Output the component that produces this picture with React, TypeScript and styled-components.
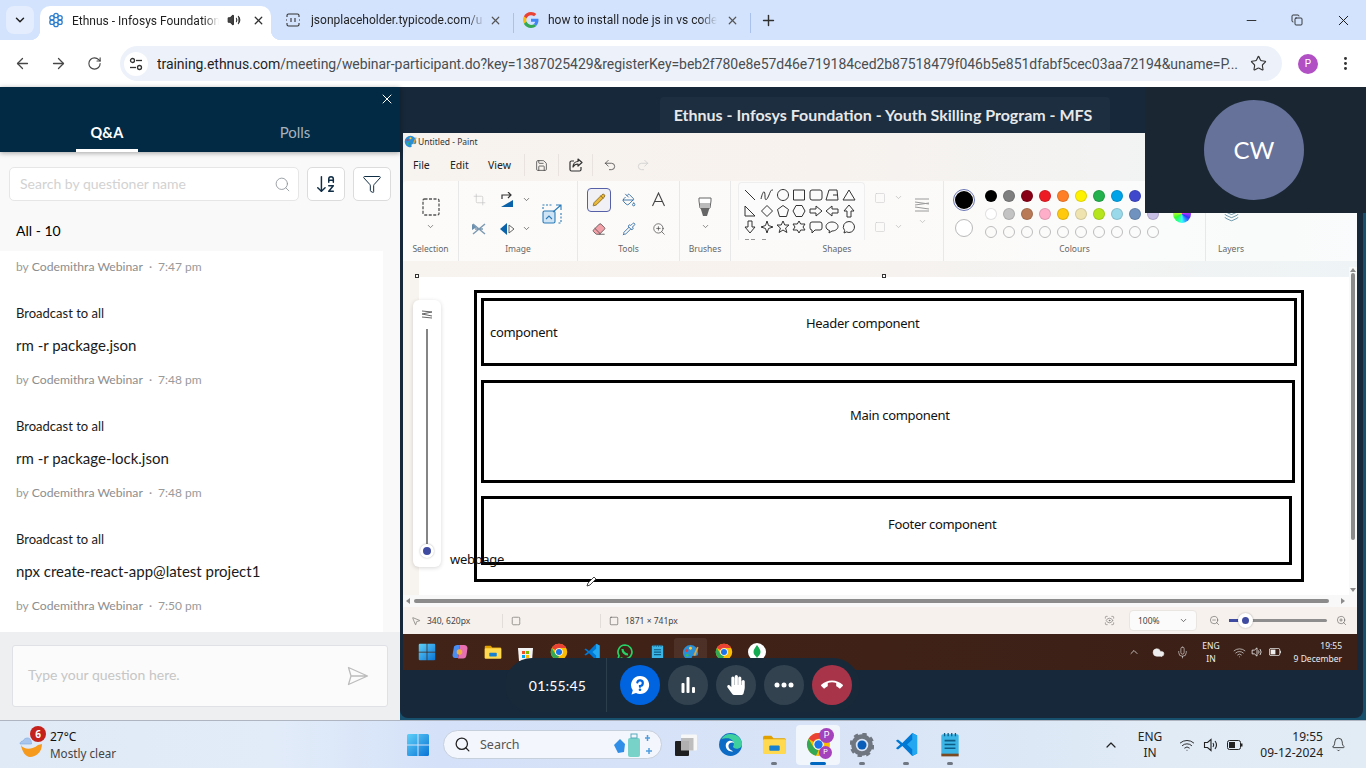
import React from "react";
import styled, { createGlobalStyle } from "styled-components";
import {
  ArrowLeft, ArrowRight, RotateCw, Star, MoreVertical, Minus, Copy, X, Plus, ChevronDown, ChevronUp, Volume2,
  Search as SearchIcon, ArrowDownAZ, Filter, Pencil, Pipette, ZoomIn, ZoomOut, Crop, Eraser, PaintBucket,
  Undo2, Redo2, Save, Wifi, Bell, Mic, Cloud, Layers, MousePointer2, Square, ScanEye,
} from "lucide-react";
import { MdCallEnd } from "react-icons/md";
import { FaHandPaper } from "react-icons/fa";

const WIN = `"Noto Sans", "Open Sans", sans-serif`;
const ROB = `Roboto, "Noto Sans", sans-serif`;
const LATO = `Lato, "Noto Sans", sans-serif`;

const Global = createGlobalStyle`
  html, body { margin: 0; padding: 0; background: #fff; overflow: hidden; }
  * { box-sizing: border-box; }
`;

const Page = styled.div`
  width: 1366px; height: 768px; display: flex; flex-direction: column; overflow: hidden; position: relative;
  font-family: ${WIN};
`;

/* ---- browser chrome ---- */
const TabStrip = styled.div`
  height: 40px; background: #d3e3fd; display: flex; align-items: flex-end; padding-left: 6px; flex-shrink: 0; color: #1f1f1f;
`;
const TabSearch = styled.div`
  width: 28px; height: 28px; margin-bottom: 6px; margin-right: 6px; border-radius: 8px; background: #e3edfd;
  display: flex; align-items: center; justify-content: center; color: #1f1f1f;
`;
const Tab = styled.div<{ $w: number; $pl: number; $gap: number; $active?: boolean }>`
  width: ${p => p.$w}px; height: 34px; display: flex; align-items: center; flex-shrink: 0; gap: ${p => p.$gap}px; position: relative;
  padding: ${p => (p.$active ? `0 9px 0 ${p.$pl}px` : `0 11px 6px ${p.$pl}px`)};
  background: ${p => (p.$active ? "#fff" : "transparent")}; border-radius: 10px 10px 0 0;
  svg { flex-shrink: 0; }
  ${p => p.$active && `
    &::before, &::after { content: ""; position: absolute; bottom: 0; width: 10px; height: 10px; }
    &::before { left: -10px; background: radial-gradient(circle at 0 0, transparent 10px, #fff 10.5px); }
    &::after { right: -10px; background: radial-gradient(circle at 100% 0, transparent 10px, #fff 10.5px); }
  `}
`;
const TabTitle = styled.div<{ $w: number }>`
  width: ${p => p.$w}px; overflow: hidden; white-space: nowrap; font: 12px ${ROB}; color: #1f1f1f; flex-shrink: 0;
  -webkit-mask-image: linear-gradient(90deg, #000 90%, transparent);
  mask-image: linear-gradient(90deg, #000 90%, transparent);
`;
const ActiveTitle = styled(TabTitle)`
  margin-top: -5px;
`;
const LongTitle = styled(TabTitle)`
  margin-right: -7px;
`;
const TabEnd = styled.div`
  margin-left: auto; display: flex; align-items: center; gap: 11px; color: #303030;
`;
const ActiveEnd = styled(TabEnd)`
  margin-top: -6px;
`;
const ActiveFav = styled.div`
  display: flex; margin-top: -6px;
`;
const TabSep = styled.div`
  width: 1px; height: 20px; background: #a8c2ec; margin-bottom: 7px; flex-shrink: 0;
`;
const NewTab = styled.div`
  width: 26px; height: 28px; margin: 0 0 6px 4px; display: flex; align-items: center; justify-content: center; color: #303030;
`;
const WindowButtons = styled.div`
  margin-left: auto; height: 40px; display: flex; align-items: center; color: #1a1a1a;
`;
const WindowButton = styled.div`
  width: 46px; height: 40px; display: flex; align-items: center; justify-content: center;
`;
const AddressRow = styled.div`
  height: 47px; background: #fff; display: flex; align-items: center; flex-shrink: 0; padding-left: 4px; color: #474747;
`;
const NavButton = styled.div`
  width: 36px; height: 36px; display: flex; align-items: center; justify-content: center;
`;
const MoreButton = styled(NavButton)`
  margin-left: 9px; color: #333;
`;
const Omnibox = styled.div`
  margin-left: 8px; width: 1162px; height: 35px; border-radius: 18px; background: #edf2fa;
  display: flex; align-items: center; padding: 0 0 0 4px;
`;
const TuneBadge = styled.div`
  width: 24px; height: 24px; border-radius: 50%; background: #fff; display: flex; align-items: center; justify-content: center; margin-right: 9px; flex-shrink: 0;
`;
const UrlText = styled.div`
  width: 1085px; white-space: nowrap; overflow: hidden; font: 14px ${ROB}; color: #4a4d50; margin-right: 8px; letter-spacing: -.055px;
  b { font-weight: 400; color: #1f1f1f; }
`;
const ProfileDot = styled.div`
  width: 20px; height: 20px; border-radius: 50%; background: #b14fc4; color: #fff; font: 10px ${ROB};
  display: flex; align-items: center; justify-content: center; margin-left: 16px;
`;

/* ---- webinar area ---- */
const Body = styled.div`
  flex: 1; min-height: 0; display: flex;
`;
const Side = styled.div`
  width: 400px; flex-shrink: 0; display: flex; flex-direction: column; background: #f9f9f9; font-family: ${LATO};
`;
const SideHead = styled.div`
  height: 65px; background: #032a44; position: relative; display: flex; flex-shrink: 0;
  box-shadow: 0 1px 5px rgba(0,0,0,.35); z-index: 2;
`;
const CloseSide = styled.div`
  position: absolute; right: 5px; top: 4px; color: #fff; display: flex;
`;
const SideTab = styled.div<{ $w: number; $active?: boolean }>`
  width: ${p => p.$w}px; height: 65px; display: flex; align-items: flex-end; justify-content: center; padding-bottom: ${p => (p.$active ? 10 : 11)}px;
  span { display: block; font: ${p => (p.$active ? 700 : 400)} ${p => (p.$active ? 14.5 : 15)}px/18px ${LATO}; color: ${p => (p.$active ? "#fff" : "#a6b2bc")}; }
`;
const UnderlinedTab = styled.div`
  position: absolute; left: 76px; top: 62px; width: 62px; height: 3px; background: #fff;
`;
const SearchRow = styled.div`
  display: flex; gap: 8px; padding: 15px 9px 0; flex-shrink: 0;
`;
const SearchField = styled.div`
  width: 290px; height: 34px; background: #fff; border: 1px solid #e6e6e6; border-radius: 5px; display: flex; align-items: center;
  padding: 0 7px 0 10px; justify-content: space-between; color: #8c9298;
  span { font: 14px ${LATO}; color: #d2d2d2; padding-bottom: 2px; }
`;
const IconButton = styled.div`
  width: 38px; height: 34px; background: #fff; border: 1px solid #dcdcdc; border-radius: 5px; display: flex; align-items: center; justify-content: center; color: #0f2d45;
`;
const AllLabel = styled.div`
  height: 50px; padding: 12px 16px 0; font: 14px/36px ${LATO}; color: #000; flex-shrink: 0;
`;
const Feed = styled.div`
  width: 383px; height: 381px; background: #fff; overflow: hidden; flex-shrink: 0; padding-left: 16px;
  & > :first-child { height: 31px; }
`;
const Meta = styled.div`
  height: 32px; display: flex; align-items: center; gap: 3px; font: 12px ${LATO}; color: #9a9a9a; white-space: nowrap;
  b { font-weight: 400; font-size: 12.2px; color: #8d8d8d; }
`;
const Broadcast = styled.div`
  margin-top: 16px; height: 30px; display: flex; align-items: center; font: 13px ${LATO}; color: #1a1a1a;
`;
const Answer = styled.div`
  margin: 1px 0 2px; height: 32px; display: flex; align-items: center; font: 15px ${LATO}; color: #1a1a1a;
`;
const Composer = styled.div`
  flex: 1; background: #eeeff0; padding: 13px 12px;
`;
const ComposerBox = styled.div`
  height: 62px; background: #fbfbfb; border: 1px solid #dfe1e6; border-radius: 3px; display: flex; align-items: center; justify-content: space-between;
  padding: 0 18px 0 15px; color: #bdbdbd;
  span { font: 14px ${LATO}; color: #c6c6c6; padding-bottom: 3px; }
`;

const Stage = styled.div`
  flex: 1; background: #17506c; position: relative;
`;
const StageInner = styled.div`
  height: 631px; margin-right: 3px; padding-left: 3px; background: #17283a; border-radius: 0 0 8px 8px; display: flex; flex-direction: column;
`;
const TitleRow = styled.div`
  height: 46px; flex-shrink: 0; display: flex; align-items: flex-end; padding-left: 257px;
`;
const TitlePlate = styled.div`
  width: 450px; height: 36px; background: #1c2e3f; border-radius: 4px 4px 0 0; display: flex; align-items: center; justify-content: center; padding: 0 4px 2px 0;
  font: 700 16px ${LATO}; color: #e6e8ea; white-space: nowrap;
`;

/* ---- paint ---- */
const Paint = styled.div`
  width: 954px; height: 537px; flex-shrink: 0; display: flex; flex-direction: column; background: linear-gradient(90deg, #f7f3ef, #f7f2ee 45%, #eef4f6);
  color: #222;
`;
const PaintTitle = styled.div`
  height: 18px; display: flex; align-items: center; gap: 1px; font: 8.5px ${WIN}; color: #333; padding: 0 0 1px 1px;
`;
const PaintMenu = styled.div`
  height: 30px; display: flex; align-items: center; padding: 0 0 2px 10px; font: 10.5px ${WIN}; color: #222;
`;
const MenuWord = styled.span<{ $w: number }>`
  width: ${p => p.$w}px; flex-shrink: 0;
`;
const MenuIcon = styled.div<{ $off?: boolean }>`
  width: 34px; height: 22px; display: flex; align-items: center; justify-content: center;
  border-left: ${p => (p.$off ? "none" : "1px solid #e8e3df")}; color: ${p => (p.$off ? "#c9c9c9" : "#333")};
`;
const Ribbon = styled.div`
  height: 80px; display: flex; background: rgba(255,255,255,.62); border-radius: 4px 4px 0 0;
`;
const RibbonSection = styled.div<{ $w: number; $bare?: boolean }>`
  width: ${p => p.$w}px; flex-shrink: 0; border-right: ${p => (p.$bare ? "none" : "1px solid #e8e8e8")}; position: relative;
  display: flex; flex-direction: column;
`;
const SectionBody = styled.div`
  height: 66px; display: flex; align-items: center; justify-content: center; color: #555;
`;
const LeftBody = styled(SectionBody)<{ $pl: number }>`
  justify-content: flex-start; padding-left: ${p => p.$pl}px;
`;
const SectionLabel = styled.div`
  height: 20px; margin-top: -6px; text-align: center; font: 8.5px/16px ${WIN}; color: #666;
`;
const ToolGrid = styled.div<{ $cols: string }>`
  display: grid; grid-template-columns: ${p => p.$cols}; grid-auto-rows: 29px; align-items: center; justify-items: center;
`;
const ShapeStyles = styled(ToolGrid)`
  margin: -4px 0 0 3px;
`;
const ToolCell = styled.div<{ $on?: boolean }>`
  width: 24px; height: 24px; display: flex; align-items: center; justify-content: center; border-radius: 4px;
  border: ${p => (p.$on ? "1px solid #5560a8" : "1px solid transparent")}; background: ${p => (p.$on ? "#f1f0f5" : "transparent")};
`;
const WideCell = styled(ToolCell)`
  grid-row: 1 / span 2; grid-column: 4;
`;
const SizeCell = styled.div`
  grid-row: 1 / span 2; grid-column: 3;
`;
const Gallery = styled.div`
  width: 127px; height: 58px; overflow: hidden; background: #fbfbfb; border: 1px solid #eee; border-bottom: none; border-radius: 4px 4px 0 0; flex-shrink: 0;
  padding: 4px 3px 0; display: grid; grid-template-columns: repeat(7, 16.4px); grid-auto-rows: 16.2px; justify-items: center; align-items: center; margin-top: -6px;
`;
const Stacked = styled.div`
  display: flex; flex-direction: column; align-items: center; gap: 5px; color: #666;
`;
const Swatches = styled.div`
  display: grid; grid-template-columns: repeat(10, 18px); grid-auto-rows: 18px; justify-items: center; align-items: center; flex-shrink: 0;
`;
const Swatch = styled.div<{ $c: string; $empty?: boolean }>`
  width: 12px; height: 12px; border-radius: 50%; background: ${p => p.$c}; border: 1px solid ${p => (p.$empty ? "#bdbdbd" : "rgba(0,0,0,.12)")};
`;
const PrimaryColour = styled.div`
  width: 22px; height: 22px; border-radius: 50%; border: 1px solid #6b76b5; display: flex; align-items: center; justify-content: center;
  &::after { content: ""; width: 18px; height: 18px; border-radius: 50%; background: #000; }
`;
const SecondaryColour = styled.div`
  width: 18px; height: 18px; border-radius: 50%; background: #fff; border: 1px solid #b9b9b9;
`;
const ColourStack = styled.div`
  display: flex; flex-direction: column; align-items: center; gap: 8px; margin-right: 7px; margin-top: -2px; flex-shrink: 0;
`;
const Rainbow = styled.div`
  width: 18px; height: 18px; border-radius: 50%; margin-left: 11px; flex-shrink: 0;
  background: conic-gradient(#f33, #f3f, #33f, #3ff, #3f3, #ff3, #f33);
`;
const PaintStrip = styled.div`
  height: 16px; position: relative;
`;
const Handle = styled.div<{ $x: number }>`
  position: absolute; left: ${p => p.$x}px; top: 13px; width: 4px; height: 4px; border: 1px solid #333; background: #fff; z-index: 1;
`;
const CanvasRow = styled.div`
  height: 318px; display: flex;
`;
const Gutter = styled.div`
  width: 16px; flex-shrink: 0;
`;
const CanvasArea = styled.div`
  flex: 1; background: #fff; position: relative;
`;
const VScroll = styled.div`
  width: 8px; flex-shrink: 0; display: flex; justify-content: center; background: #f8f9f9; position: relative; margin-top: -10px;
  &::before { content: ""; position: absolute; top: 1px; left: 1px; border: 3px solid transparent; border-bottom: 4px solid #8b8b8b; border-top: none; }
  &::after { content: ""; position: absolute; top: 6px; left: 2px; width: 4px; height: 267px; background: #8b8b8b; border-radius: 2px; }
`;
const VScrollDown = styled.div`
  position: absolute; bottom: 3px; left: 1px; border: 3px solid transparent; border-top: 4px solid #8b8b8b; border-bottom: none;
`;
const HScroll = styled.div`
  height: 12px; background: #f8f8f8; padding: 4px 28px 0 11px; position: relative;
  &::after { content: ""; display: block; width: 915px; height: 4px; background: #8b8b8b; border-radius: 2px; }
`;
const HArrow = styled.div<{ $side: "left" | "right" }>`
  position: absolute; top: 3px; ${p => p.$side}: ${p => (p.$side === "left" ? 3 : 12)}px; border: 3px solid transparent;
  ${p => (p.$side === "left" ? "border-right: 4px solid #8b8b8b; border-left: none;" : "border-left: 4px solid #8b8b8b; border-right: none;")}
`;
const DiagramBox = styled.div<{ $x: number; $y: number; $w: number; $h: number }>`
  position: absolute; left: ${p => p.$x}px; top: ${p => p.$y}px; width: ${p => p.$w}px; height: ${p => p.$h}px; border: 3px solid #000;
`;
const DiagramText = styled.div<{ $x: number; $y: number }>`
  position: absolute; left: ${p => p.$x}px; top: ${p => p.$y}px; font: 13px/18px ${WIN}; color: #111; white-space: nowrap; letter-spacing: -.32px;
`;
const PenCursor = styled.div`
  position: absolute; left: 167px; top: 298px; display: flex;
`;
const SizeSlider = styled.div`
  position: absolute; left: -6px; top: 23px; width: 28px; height: 267px; background: #fff; border-radius: 6px;
  box-shadow: 0 1px 4px rgba(0,0,0,.16); display: flex; flex-direction: column; align-items: center; padding-top: 9px; color: #666;
`;
const SliderTrack = styled.div`
  width: 2px; height: 215px; margin-top: 10px; background: #858585;
`;
const SliderKnob = styled.div`
  width: 14px; height: 14px; border-radius: 50%; background: #3f4ba0; border: 3px solid #fff; box-shadow: 0 0 2px rgba(0,0,0,.3);
`;
const StatusBar = styled.div`
  height: 27px; display: flex; align-items: center; font: 8.5px ${WIN}; color: #444; background: #f6f1ec;
`;
const StatusCell = styled.div<{ $w: number; $bare?: boolean }>`
  width: ${p => p.$w}px; flex-shrink: 0; display: flex; align-items: center; gap: 6px; padding-left: 8px; height: 14px;
  border-right: ${p => (p.$bare ? "none" : "1px solid #e2ddd8")};
`;
const FitIcon = styled.div`
  margin-left: 383px; margin-right: 14px; display: flex;
`;
const ZoomSelect = styled.div`
  width: 68px; height: 21px; background: #fbfbfb; border: 1px solid #e9e5e1; border-radius: 4px; display: flex; align-items: center; justify-content: space-between; padding: 0 8px; font: 8.5px ${WIN}; color: #444; margin-right: 12px;
`;
const ZoomTrack = styled.div`
  width: 98px; height: 3px; background: #8e8e8e; border-radius: 2px; position: relative; margin: 0 9px;
`;
const ZoomFill = styled.div`
  position: absolute; left: 0; top: 0; width: 10px; height: 3px; background: #3f4ba0;
`;
const ZoomKnob = styled.div`
  position: absolute; left: 9px; top: -6px; width: 15px; height: 15px; border-radius: 50%; background: #3f4ba0; border: 4px solid #fff; box-shadow: 0 0 2px rgba(0,0,0,.3);
`;
const InnerTaskbar = styled.div`
  height: 36px; display: flex; align-items: center; background: linear-gradient(90deg, #412317, #3f2117 50%, #3a2017); color: #eee; padding: 0 0 0 7px; 
`;
const InnerIcon = styled.div<{ $on?: boolean }>`
  width: 33px; height: 28px; flex-shrink: 0; display: flex; align-items: center; justify-content: center; border-radius: 3px;
  background: ${p => (p.$on ? "rgba(255,255,255,.07)" : "transparent")};
`;
const Tray = styled.div`
  margin-left: auto; display: flex; align-items: center; color: #eee; padding-right: 15px;
`;
const TrayText = styled.div<{ $w: number; $align?: string }>`
  width: ${p => p.$w}px; font: 8.5px/13px ${WIN}; text-align: ${p => p.$align || "center"}; color: #eee;
`;
const TraySlot = styled.div<{ $w: number }>`
  width: ${p => p.$w}px; display: flex; justify-content: center;
`;

/* ---- overlays ---- */
const WebcamTile = styled.div`
  position: absolute; right: 0; top: 0; width: 221px; height: 126px; background: #1a2733; display: flex; align-items: center; justify-content: center; padding-right: 3px;
`;
const Avatar = styled.div`
  width: 100px; height: 100px; border-radius: 50%; background: #66729a; color: #fff; font: 24px ${LATO}; display: flex; align-items: center; justify-content: center; padding-bottom: 2px;
`;
const ControlBar = styled.div`
  position: absolute; left: 105px; top: 571px; width: 355px; height: 54px; border-radius: 27px; background: #182a3a; display: flex; align-items: center;
`;
const Timer = styled.div`
  width: 102px; height: 54px; border-right: 1px solid #2c3d4c; padding-left: 4px; display: flex; align-items: center; justify-content: center; font: 14px ${LATO}; color: #fff; letter-spacing: .2px; flex-shrink: 0;
`;
const CtlGroup = styled.div`
  display: flex; gap: 8px; padding-left: 13px;
`;
const CtlButton = styled.div<{ $bg: string }>`
  width: 40px; height: 40px; border-radius: 50%; background: ${p => p.$bg}; display: flex; align-items: center; justify-content: center; color: #fff;
`;

/* ---- windows taskbar ---- */
const Taskbar = styled.div`
  height: 48px; flex-shrink: 0; border-top: 1px solid #b0b6c1; display: flex; align-items: center; position: relative;
  background: linear-gradient(90deg, #dfeaf6, #e2ecf9 20%, #d4e1f8 32%, #d8e3f7 60%, #e0ebf6 85%, #e2ecf5);
`;
const Weather = styled.div`
  width: 400px; flex-shrink: 0; padding-left: 19px; display: flex; align-items: center; gap: 7px; position: relative;
`;
const WeatherBadge = styled.div`
  position: absolute; left: 30px; top: -3px; width: 16px; height: 16px; border-radius: 50%; background: #c4201c; color: #fff; font: 700 10px/16px ${WIN}; text-align: center;
`;
const WeatherText = styled.div`
  font: 12px/16px ${WIN}; color: #111;
  small { display: block; font-size: 11.7px; color: #444; }
`;
const TaskCenter = styled.div`
  display: flex; align-items: center;
`;
const WinStart = styled.div`
  width: 43px; height: 40px; display: flex; align-items: center; justify-content: flex-end; padding-right: 13px; flex-shrink: 0;
`;
const SearchPill = styled.div`
  width: 219px; height: 29px; border-radius: 15px; background: #f3f6fd; border: 1px solid #c6cfdc; display: flex; align-items: center; padding: 0 6px 0 10px; gap: 9px; font: 12.5px ${WIN}; color: #555; margin-right: 2px;
`;
const PillArt = styled.div`
  margin-left: auto; display: flex;
`;
const TaskIcon = styled.div<{ $on?: boolean; $run?: boolean }>`
  width: 44px; height: 40px; flex-shrink: 0; display: flex; align-items: center; justify-content: center; position: relative; border-radius: 4px;
  background: ${p => (p.$on ? "rgba(255,255,255,.65)" : "transparent")};
  ${p => p.$run && `&::after { content: ""; position: absolute; bottom: 0; left: 50%; margin-left: ${p.$on ? "-8px" : "-3px"}; width: ${p.$on ? "16px" : "6px"}; height: 3px; border-radius: 2px; background: ${p.$on ? "#0067c0" : "#6f7782"}; }`}
`;
const ProfileBadge = styled.div<{ $s: number; $r: number; $t: number }>`
  position: absolute; right: ${p => p.$r}px; top: ${p => p.$t}px; width: ${p => p.$s}px; height: ${p => p.$s}px; border-radius: 50%; background: #a442bd; color: #fff;
  font: ${p => p.$s - 6}px/${p => p.$s}px ${ROB}; text-align: center;
`;
const TaskTray = styled.div`
  position: absolute; right: 0; top: 0; height: 47px; display: flex; align-items: center; color: #222; padding-right: 13px;
`;
const TaskTrayText = styled.div<{ $w: number; $align?: string }>`
  width: ${p => p.$w}px; font: 12px/16px ${WIN}; text-align: ${p => p.$align || "center"}; color: #222;
`;
const TaskSlot = styled.div<{ $w: number }>`
  width: ${p => p.$w}px; display: flex; justify-content: center;
`;

/* ---- drawings ---- */
const WinLogo = ({ s = 24 }: { s?: number }) => (
  <svg width={s} height={s} viewBox="0 0 24 24">
    <defs><linearGradient id="wl" x1="0" y1="0" x2="1" y2="1"><stop offset="0" stopColor="#5fd0f8" /><stop offset="1" stopColor="#0a74d6" /></linearGradient></defs>
    <path fill="url(#wl)" d="M1 2.5a1.5 1.5 0 0 1 1.5-1.5H11.500v10.500H1zM12.500 1H21.500A1.500 1.500 0 0 1 23 2.500V11.500H12.500zM1 12.500H11.500V23H2.500A1.500 1.500 0 0 1 1 21.500zM12.500 12.500H23V21.500A1.500 1.500 0 0 1 21.500 23H12.500z" />
  </svg>
);
const ChromeLogo = ({ s = 24 }: { s?: number }) => (
  <svg width={s} height={s} viewBox="0 0 24 24">
    <circle cx="12" cy="12" r="11" fill="#fbbc04" />
    <path fill="#ea4335" d="M12 1a11 11 0 0 1 9.530 5.500H12a5.500 5.500 0 0 0-4.760 2.750L2.470 6.500A11 11 0 0 1 12 1z" />
    <path fill="#34a853" d="M7.240 14.750L12 17.500l-2.400 5.200A11 11 0 0 1 2.470 17.500 11 11 0 0 1 2.470 6.500z" />
    <circle cx="12" cy="12" r="5" fill="#fff" /><circle cx="12" cy="12" r="4" fill="#1a73e8" />
  </svg>
);
const VSCode = ({ s = 24 }: { s?: number }) => (
  <svg width={s} height={s} viewBox="0 0 24 24">
    <path fill="#0078d4" d="M17.500 1L8 10.500 3.800 7.300 1.800 8.300 6 12l-4.200 3.700 2 1 4.200-3.200L17.500 23l4.700-2.300V3.300z" />
    <path fill="#22a7f0" d="M17.500 1l4.700 2.300v17.400L17.500 23V16.500L12.500 12l5-4.500z" />
  </svg>
);
const NotepadLogo = ({ s = 24 }: { s?: number }) => (
  <svg width={s} height={s} viewBox="0 0 24 24">
    <rect x="4" y="2" width="16" height="19" rx="1.500" fill="#3ab5e6" />
    <rect x="4" y="20" width="16" height="2.500" fill="#7a4a22" />
    <path d="M7 8h10M7 11.500h10M7 15h10" stroke="#0d5c85" strokeWidth="1.500" />
    <path d="M7 1v3M10.300 1v3M13.600 1v3M17 1v3" stroke="#0d5c85" strokeWidth="1.200" />
  </svg>
);
const FolderLogo = ({ s = 24 }: { s?: number }) => (
  <svg width={s} height={s} viewBox="0 0 24 24">
    <path fill="#e0a100" d="M1 5a1.500 1.500 0 0 1 1.500-1.500h6.500l2 2.500h10.500A1.500 1.500 0 0 1 23 7.500V20H1z" />
    <rect x="1" y="7" width="22" height="14" rx="1" fill="#ffd94f" />
    <rect x="7" y="13" width="10" height="5" rx="1" fill="#1780d0" />
  </svg>
);
const EdgeLogo = ({ s = 24 }: { s?: number }) => (
  <svg width={s} height={s} viewBox="0 0 24 24">
    <circle cx="12" cy="12" r="11" fill="#0c6bc4" />
    <path fill="#3fd0a0" d="M3 7a11 11 0 0 1 20 3.500c.6 3.500-2.300 5.500-5 5.500-2 0-3.500-.7-3.500-2 0-.5.7-1 .7-2.500 0-3-3-5.500-6-5.500C6.500 6 4.500 6.200 3 7z" />
    <path fill="#fff" d="M14.500 18.500c-3 1-6.500-1-7-4.500-.4-3 1.500-5.500 4.500-5.500 2 0 3 1 3.500 2-3-1.400-5.500.5-5.500 3 0 2.500 2 4 4.500 5z" />
  </svg>
);
const SettingsLogo = ({ s = 24 }: { s?: number }) => (
  <svg width={s} height={s} viewBox="0 0 24 24">
    <circle cx="12" cy="12" r="8.500" fill="none" stroke="#6f7680" strokeWidth="4.500" />
    <circle cx="12" cy="12" r="11" fill="none" stroke="#6f7680" strokeWidth="2.800" strokeDasharray="4.300 4.340" />
    <circle cx="12" cy="12" r="4.500" fill="#0a5db8" />
  </svg>
);
const TaskViewLogo = () => (
  <svg width="24" height="24" viewBox="0 0 24 24">
    <rect x="7" y="1.500" width="16" height="16" rx="1" fill="#f7f7f7" />
    <rect x="7" y="5" width="12.500" height="12.500" fill="#bdbdbd" />
    <rect x="1" y="8" width="14" height="15" rx="1" fill="#1f1f1f" />
    <rect x="7" y="8" width="8" height="9.500" fill="#b0b0b0" />
  </svg>
);
const GoogleG = () => (
  <svg width="16" height="16" viewBox="0 0 48 48">
    <path fill="#EA4335" d="M24 9.500c3.500 0 6.700 1.200 9.200 3.600l6.900-6.900C35.900 2.400 30.500 0 24 0 14.600 0 6.500 5.400 2.600 13.200l8 6.200C12.500 13.700 17.800 9.500 24 9.500z" />
    <path fill="#4285F4" d="M46.500 24.500c0-1.600-.1-3.100-.4-4.500H24v9h12.700c-.6 2.900-2.200 5.400-4.700 7l7.300 5.700c4.300-4 7.200-9.900 7.200-17.200z" />
    <path fill="#FBBC05" d="M10.500 28.600A14.500 14.500 0 0 1 10.500 19.400l-8-6.200A24 24 0 0 0 2.600 34.800z" />
    <path fill="#34A853" d="M24 48c6.500 0 11.900-2.100 15.900-5.800L32.600 36.500c-2.100 1.400-4.900 2.200-8.600 2.200-6.200 0-11.500-4.200-13.400-9.900l-8 6.200C6.500 42.600 14.600 48 24 48z" />
  </svg>
);
const EthnusFav = () => (
  <svg width="16" height="16" viewBox="0 0 16 16" fill="none" stroke="#2f7fd0" strokeWidth="1.300">
    <circle cx="8" cy="3.500" r="2.200" /><circle cx="8" cy="12.500" r="2.200" />
    <circle cx="4" cy="5.800" r="2.200" /><circle cx="12" cy="5.800" r="2.200" />
    <circle cx="4" cy="10.200" r="2.200" /><circle cx="12" cy="10.200" r="2.200" />
  </svg>
);
const JsonFav = () => (
  <svg width="16" height="16" viewBox="0 0 16 16" fill="none" stroke="#333" strokeWidth="1.100">
    <path d="M2 5V3.500q0-1.500 1.500-1.500h9Q14 2 14 3.500V5M2 11v1.500Q2 14 3.500 14h9q1.500 0 1.500-1.500V11M1 8h1M14 8h1M6 6v4M10 6v4" />
  </svg>
);
const TuneIcon = () => (
  <svg width="16" height="16" viewBox="0 0 16 16" fill="none" stroke="#333" strokeWidth="1.300">
    <circle cx="4.500" cy="4.500" r="2" /><path d="M8 4.500h6" /><circle cx="11.500" cy="11.500" r="2" /><path d="M2 11.500h6" />
  </svg>
);
const SendPlane = () => (
  <svg width="22" height="20" viewBox="0 0 22 20" fill="none" stroke="#bcbcbc" strokeWidth="1.300" strokeLinejoin="round">
    <path d="M1.500 1.500L20.500 10 1.500 18.500 4 10zM4 10h16" />
  </svg>
);
const WeatherIcon = () => (
  <svg width="24" height="26" viewBox="0 0 24 26">
    <path fill="#f59a1c" d="M2 13c3 5 11 5 17 0l4-1c0 8-6 13-12 13C7 25 3 20 2 13z" />
    <path fill="#a9c6ef" stroke="#7ea7de" strokeWidth=".6" d="M1 12c0-2 1.500-3 3-3 .8-2 2.500-3 4.500-3 2.500 0 4 2 4 6z" />
  </svg>
);
const Question = () => (
  <svg width="22" height="22" viewBox="0 0 22 22">
    <path fill="#fff" d="M11 2a9 9 0 1 1-4 17l-4.500 1.500 1.300-4.200A9 9 0 0 1 11 2z" />
    <path fill="none" stroke="#0064e0" strokeWidth="2.200" strokeLinecap="round" d="M8.300 8.500A2.800 2.800 0 1 1 11 12v.8" />
    <circle cx="11" cy="15.800" r="1.300" fill="#0064e0" />
  </svg>
);
const Bars = () => (
  <svg width="16" height="16" viewBox="0 0 16 16" fill="#fff">
    <rect x="1.500" y="6" width="3" height="10" rx="1" /><rect x="6.500" y="0" width="3" height="16" rx="1" /><rect x="12" y="10" width="3" height="6" rx="1" />
  </svg>
);
const Dots = () => (
  <svg width="20" height="6" viewBox="0 0 20 6" fill="#fff"><circle cx="3" cy="3" r="2.500" /><circle cx="10" cy="3" r="2.500" /><circle cx="17" cy="3" r="2.500" /></svg>
);
const Battery = ({ c = "#222", s = 1 }: { c?: string; s?: number }) => (
  <svg width={16 * s} height={10 * s} viewBox="0 0 16 10" fill="none">
    <rect x=".5" y=".5" width="13" height="9" rx="2" stroke={c} /><rect x="2" y="2" width="6" height="6" fill={c} /><rect x="14" y="3.500" width="1.500" height="3" fill={c} />
  </svg>
);
const Speaker = ({ c = "#222", s = 14 }: { c?: string; s?: number }) => (
  <svg width={s} height={s} viewBox="0 0 16 16" fill="none" stroke={c} strokeWidth="1.100">
    <path d="M1.500 5.500h3L8 2.500v11l-3.500-3h-3zM10 6q1.500 2 0 4M12 4q3 4 0 8" />
  </svg>
);
const PaintLogo = ({ s = 17 }: { s?: number }) => (
  <svg width={s} height={s} viewBox="0 0 18 18">
    <path fill="#2b8fd6" d="M9 1a8 8 0 0 0-8 8c0 4 3 8 8 8 1.500 0 2-1 1.500-2-.5-1.200 0-2.500 2-2.500H15c2 0 2-2 2-3.500a8 8 0 0 0-8-8z" />
    <circle cx="5" cy="7" r="1.500" fill="#e33" /><circle cx="9" cy="4.500" r="1.500" fill="#fc3" /><circle cx="5.500" cy="12" r="1.500" fill="#3b5" />
    <path d="M12 12l4-9 1.500.8-3.500 9z" fill="#d9a441" />
  </svg>
);
const MongoLogo = () => (
  <svg width="18" height="18" viewBox="0 0 18 18">
    <circle cx="9" cy="9" r="9" fill="#fff" />
    <path fill="#13aa52" d="M9 2c2 3 3.500 4.500 3.500 7S10.500 13 9.400 14L9 16.500 8.600 14C7.500 13 5.500 11.500 5.500 9S7 5 9 2z" />
  </svg>
);
const CopilotLogo = () => (
  <svg width="18" height="18" viewBox="0 0 18 18">
    <path d="M3 3.500Q4 2 6 2h3l-2 13H4Q1.500 15 1.500 12z" fill="#4a8df0" />
    <path d="M9 2h4q3 0 3.500 3l-1 7q-.5 3.500-3.500 3.500H7z" fill="#e86fb0" />
    <circle cx="8.500" cy="9" r="2.800" fill="#f0b040" />
  </svg>
);
const StoreLogo = () => (
  <svg width="17" height="17" viewBox="0 0 17 17">
    <path d="M1 4h15l-1 13H2z" fill="#f3f3f3" />
    <rect x="5" y="7" width="3" height="3" fill="#f25022" /><rect x="9" y="7" width="3" height="3" fill="#7fba00" />
    <rect x="5" y="11" width="3" height="3" fill="#00a4ef" /><rect x="9" y="11" width="3" height="3" fill="#ffb900" />
  </svg>
);
const WhatsAppLogo = () => (
  <svg width="18" height="18" viewBox="0 0 18 18" fill="none" stroke="#25d366" strokeWidth="1.700">
    <path d="M9 2a7 7 0 1 1-3.300 13.200L2 16.200l1-3.600A7 7 0 0 1 9 2z" /><path d="M6.500 6c0 3 2.500 5.500 5.500 5.500" strokeWidth="2.200" />
  </svg>
);
const Brush = () => (
  <svg width="16" height="20" viewBox="0 0 16 20" fill="none">
    <path d="M2 1h12v3l-1 7H3L2 4z" fill="#fff" stroke="#666" /><path d="M3 6h10v5H3z" fill="#bbb" /><path d="M3.500 11h9l-2.500 8H6z" fill="#666" />
  </svg>
);
const StackLines = () => (
  <svg width="16" height="14" viewBox="0 0 16 14" fill="none" stroke="#9a9a9a"><path d="M1 1h14M1 4l14 2M1 7l14-2M1 9l14 2M1 13h14" /></svg>
);
const SizeLines = () => (
  <svg width="12" height="10" viewBox="0 0 12 10" fill="none" stroke="#666"><path d="M1 2l10 1M1 5l10-2M1 5l10 2M1 8l10 1" /></svg>
);
const SelectBox = () => (
  <svg width="20" height="20" viewBox="0 0 20 20" fill="none" stroke="#555" strokeWidth="1.300" strokeDasharray="3 1.500"><rect x="2" y="2" width="16" height="16" rx="1.500" /></svg>
);
const Resize = () => (
  <svg width="20" height="20" viewBox="0 0 20 20" fill="none" stroke="#2b7bb8" strokeWidth="1.100">
    <rect x="1" y="7" width="12" height="12" rx="1.500" fill="#cfe5f5" /><path d="M4 15l3-3 3 3M14 1h5v5M11 8l8-7" /><path strokeDasharray="2 1.500" d="M1 5V1h10M19 9v10h-4" />
  </svg>
);
const TextTool = () => (
  <svg width="15" height="15" viewBox="0 0 15 15" fill="none" stroke="#444" strokeWidth="1.100"><path d="M1.500 14L7.500 1l6 13M3.800 9.500h7.400" /></svg>
);
const ShareBox = () => (
  <svg width="14" height="14" viewBox="0 0 14 14" fill="none" stroke="#333" strokeWidth="1.200" strokeLinejoin="round">
    <path d="M5 3H2.500A1.500 1.500 0 0 0 1 4.500v7A1.500 1.500 0 0 0 2.500 13h8a1.500 1.500 0 0 0 1.500-1.500V9" /><path d="M9 1l4 3.500L9 8V6c-2.500 0-4 1-5 3 0-3 2-5.500 5-5.500z" />
  </svg>
);
const Pen = () => (
  <svg width="12" height="12" viewBox="0 0 12 12" fill="#fff" stroke="#333" strokeWidth=".9"><path d="M1 11l1-3 6-6 2 2-6 6z" /></svg>
);
const Flip = ({ v }: { v: "a" | "b" | "c" }) => (
  <svg width="16" height="16" viewBox="0 0 16 16">
    {v === "a" && <><path d="M2 15L14 8v7z" fill="#0a63a8" /><path d="M3 7V3h9M9 0l3 3-3 3" fill="none" stroke="#333" strokeWidth="1.200" /></>}
    {v === "b" && <><path d="M8 2L1 8l7 6z" fill="#0a63a8" /><path d="M10 4l5 4-5 4z" fill="none" stroke="#666" /></>}
    {v === "c" && <><path d="M1 3l5 3-5 3zM1 10l5 3" fill="#6b8fae" /><path d="M2 3l12 10M14 3L2 13M4 8h8" stroke="#7d9ab3" strokeWidth="1.500" /></>}
  </svg>
);
const SHAPES = [
  "M2 2l10 10", "M1 11c2-9 4-9 4-3s2 4 4-1 2-5 4-5", "M7 1.500a5.500 5.500 0 1 0 .01 0z", "M1.500 2h11v10h-11z", "M3 2h8a2 2 0 0 1 2 2v6a2 2 0 0 1-2 2H3a2 2 0 0 1-2-2V4a2 2 0 0 1 2-2z", "M4 2h8l1 10H1zM8 7l5 0", "M7 2l6 10H1z",
  "M2 2v10h10z", "M7 1.500L12.500 7 7 12.500 1.500 7z", "M7 1.500l5.500 4-2 7h-7l-2-7z", "M4 1.500h6l3 5.500-3 5.500H4L1 7z", "M1 5h6V2l6 5-6 5V9H1z", "M13 5H7V2L1 7l6 5V9h6z", "M5 13V7H2l5-6 5 6H9v6z",
  "M5 1v6H2l5 6 5-6H9V1z", "M7 1l1.500 4.500L13 7l-4.500 1.500L7 13l-1.500-4.500L1 7l4.500-1.500z", "M7 1l1.800 4h4.200l-3.400 3 1.300 4.500L7 10l-3.900 2.500L4.400 8 1 5h4.200z", "M7 1l1.700 3H13l-2 3 2 3H8.700L7 13l-1.700-3H1l2-3-2-3h4.300z", "M3 2h8a2 2 0 0 1 2 2v4a2 2 0 0 1-2 2H6l-3 3v-3a2 2 0 0 1-2-2V4a2 2 0 0 1 2-2z", "M7 2c3.300 0 6 2 6 4.500S10.300 11 7 11l-3 2 .5-2.500C2.500 10 1 8.500 1 6.500 1 4 3.700 2 7 2z", "M7 1.500a5.500 5.500 0 1 1-2.500 10.400L2 13l.6-2.500A5.500 5.500 0 0 1 7 1.500z",
  "M2 3h4v4H2zM8 3h4v4H8z", "M2 3h4v4H2zM8 3l3 3",
];
const ShapeIcon = ({ d }: { d: string }) => (
  <svg width="14" height="14" viewBox="0 0 14 14" fill="none" stroke="#333" strokeWidth="1"><path d={d} /></svg>
);

const ROW1 = ["#000000", "#7f7f7f", "#880015", "#ed1c24", "#ff7f27", "#fff200", "#22b14c", "#00a2e8", "#3f48cc", "#a349a4"];
const ROW2 = ["#ffffff", "#c3c3c3", "#b97a57", "#ffaec9", "#ffc90e", "#efe4b0", "#b5e61d", "#99d9ea", "#7092be", "#c8bfe7"];

const ITEMS = [
  { q: "rm -r package.json", t: "7:48 pm" },
  { q: "rm -r package-lock.json", t: "7:48 pm" },
  { q: "npx create-react-app@latest project1", t: "7:50 pm" },
];

const MetaLine = ({ t }: { t: string }) => (
  <Meta><span>by</span><b>Codemithra Webinar</b><span>&nbsp;·&nbsp;</span><span>{t}</span></Meta>
);

export default function App() {
  return (
    <Page>
      <Global />
      <TabStrip>
        <TabSearch><ChevronDown size={14} strokeWidth={2.5} /></TabSearch>
        <Tab $w={231} $pl={8} $gap={8} $active>
          <ActiveFav><EthnusFav /></ActiveFav>
          <ActiveTitle $w={147}>Ethnus - Infosys Foundation</ActiveTitle>
          <ActiveEnd><Volume2 size={14} fill="#444" strokeWidth={1.8} /><X size={13} strokeWidth={2.4} /></ActiveEnd>
        </Tab>
        <Tab $w={242} $pl={14} $gap={10}>
          <JsonFav />
          <LongTitle $w={174}>jsonplaceholder.typicode.com/u</LongTitle>
          <TabEnd><X size={13} strokeWidth={2.2} color="#555" /></TabEnd>
        </Tab>
        <TabSep />
        <Tab $w={236} $pl={9} $gap={9}>
          <GoogleG />
          <TabTitle $w={169}>how to install node js in vs code</TabTitle>
          <TabEnd><X size={13} strokeWidth={2.2} color="#555" /></TabEnd>
        </Tab>
        <TabSep />
        <NewTab><Plus size={17} strokeWidth={2} /></NewTab>
        <WindowButtons>
          <WindowButton><Minus size={15} strokeWidth={1.4} /></WindowButton>
          <WindowButton><Copy size={12} strokeWidth={1.7} /></WindowButton>
          <WindowButton><X size={17} strokeWidth={1.4} /></WindowButton>
        </WindowButtons>
      </TabStrip>

      <AddressRow>
        <NavButton><ArrowLeft size={17} strokeWidth={1.8} /></NavButton>
        <NavButton><ArrowRight size={17} strokeWidth={1.8} /></NavButton>
        <NavButton><RotateCw size={15} strokeWidth={1.8} /></NavButton>
        <Omnibox>
          <TuneBadge><TuneIcon /></TuneBadge>
          <UrlText><b>training.ethnus.com</b>/meeting/webinar-participant.do?key=1387025429&amp;registerKey=beb2f780e8e57d46e719184ced2b87518479f046b5e851dfabf5cec03aa72194&amp;uname=P...</UrlText>
          <Star size={17} strokeWidth={1.6} color="#333" />
        </Omnibox>
        <ProfileDot>P</ProfileDot>
        <MoreButton><MoreVertical size={17} strokeWidth={2.2} /></MoreButton>
      </AddressRow>

      <Body>
        <Side>
          <SideHead>
            <SideTab $w={214} $active><span>Q&amp;A</span></SideTab>
            <SideTab $w={162}><span>Polls</span></SideTab>
            <UnderlinedTab />
            <CloseSide><X size={16} strokeWidth={1.5} /></CloseSide>
          </SideHead>
          <SearchRow>
            <SearchField><span>Search by questioner name</span><SearchIcon size={17} strokeWidth={1.2} /></SearchField>
            <IconButton><ArrowDownAZ size={22} strokeWidth={1.6} /></IconButton>
            <IconButton><Filter size={20} strokeWidth={1.2} /></IconButton>
          </SearchRow>
          <AllLabel>All - 10</AllLabel>
          <Feed>
            <MetaLine t="7:47 pm" />
            {ITEMS.map(i => (
              <React.Fragment key={i.q}>
                <Broadcast>Broadcast to all</Broadcast>
                <Answer>{i.q}</Answer>
                <MetaLine t={i.t} />
              </React.Fragment>
            ))}
          </Feed>
          <Composer>
            <ComposerBox><span>Type your question here.</span><SendPlane /></ComposerBox>
          </Composer>
        </Side>

        <Stage>
          <StageInner>
            <TitleRow><TitlePlate>Ethnus - Infosys Foundation - Youth Skilling Program - MFS</TitlePlate></TitleRow>
            <Paint>
              <PaintTitle><PaintLogo s={13} />Untitled - Paint</PaintTitle>
              <PaintMenu>
                <MenuWord $w={37}>File</MenuWord><MenuWord $w={38}>Edit</MenuWord><MenuWord $w={36}>View</MenuWord>
                <MenuIcon><Save size={13} strokeWidth={1.3} /></MenuIcon>
                <MenuIcon><ShareBox /></MenuIcon>
                <MenuIcon><Undo2 size={14} strokeWidth={1.2} /></MenuIcon>
                <MenuIcon $off><Redo2 size={14} strokeWidth={1.2} /></MenuIcon>
              </PaintMenu>
              <Ribbon>
                <RibbonSection $w={56}>
                  <SectionBody><Stacked><SelectBox /><ChevronDown size={9} /></Stacked></SectionBody>
                  <SectionLabel>Selection</SectionLabel>
                </RibbonSection>
                <RibbonSection $w={119}>
                  <SectionBody>
                    <ToolGrid $cols="30px 26px 12px 40px">
                      <ToolCell><Crop size={13} strokeWidth={1.1} color="#bbb" /></ToolCell>
                      <ToolCell><Flip v="a" /></ToolCell><ChevronDown size={9} />
                      <WideCell><Resize /></WideCell>
                      <ToolCell><Flip v="c" /></ToolCell>
                      <ToolCell><Flip v="b" /></ToolCell><ChevronDown size={9} />
                    </ToolGrid>
                  </SectionBody>
                  <SectionLabel>Image</SectionLabel>
                </RibbonSection>
                <RibbonSection $w={102}>
                  <SectionBody>
                    <ToolGrid $cols="30px 30px 30px">
                      <ToolCell $on><Pencil size={14} strokeWidth={1.3} color="#7a5a14" fill="#eab93b" /></ToolCell>
                      <ToolCell><PaintBucket size={14} strokeWidth={1.4} color="#1f5f9c" /></ToolCell>
                      <ToolCell><TextTool /></ToolCell>
                      <ToolCell><Eraser size={14} strokeWidth={1.3} color="#444" fill="#f4a0a8" /></ToolCell>
                      <ToolCell><Pipette size={14} strokeWidth={1.4} color="#1f5f9c" /></ToolCell>
                      <ToolCell><ZoomIn size={14} strokeWidth={1.2} color="#444" /></ToolCell>
                    </ToolGrid>
                  </SectionBody>
                  <SectionLabel>Tools</SectionLabel>
                </RibbonSection>
                <RibbonSection $w={51}>
                  <SectionBody><Stacked><Brush /><ChevronDown size={9} /></Stacked></SectionBody>
                  <SectionLabel>Brushes</SectionLabel>
                </RibbonSection>
                <RibbonSection $w={213}>
                  <LeftBody $pl={7}>
                    <Gallery>{SHAPES.map((d, i) => <ShapeIcon key={i} d={d} />)}</Gallery>
                    <ShapeStyles $cols="24px 12px 36px">
                      <Square size={12} strokeWidth={1} color="#c5c5c5" /><ChevronDown size={9} color="#bbb" />
                      <SizeCell><Stacked><StackLines /><ChevronDown size={9} color="#bbb" /></Stacked></SizeCell>
                      <Square size={12} strokeWidth={1} color="#c5c5c5" /><ChevronDown size={9} color="#bbb" />
                    </ShapeStyles>
                  </LeftBody>
                  <SectionLabel>Shapes</SectionLabel>
                </RibbonSection>
                <RibbonSection $w={262}>
                  <LeftBody $pl={9}>
                    <ColourStack><PrimaryColour /><SecondaryColour /></ColourStack>
                    <Swatches>
                      {ROW1.map(c => <Swatch key={c} $c={c} />)}
                      {ROW2.map(c => <Swatch key={c} $c={c} />)}
                      {ROW1.map((c, i) => <Swatch key={i} $c="transparent" $empty />)}
                    </Swatches>
                    <Rainbow />
                  </LeftBody>
                  <SectionLabel>Colours</SectionLabel>
                </RibbonSection>
                <RibbonSection $w={50} $bare>
                  <SectionBody><Layers size={15} strokeWidth={1} color="#1f5f7c" /></SectionBody>
                  <SectionLabel>Layers</SectionLabel>
                </RibbonSection>
              </Ribbon>
              <PaintStrip><Handle $x={12} /><Handle $x={479} /></PaintStrip>
              <CanvasRow>
                <Gutter />
                <CanvasArea>
                  <DiagramBox $x={55} $y={13} $w={830} $h={292} />
                  <DiagramBox $x={62} $y={21} $w={816} $h={68} />
                  <DiagramBox $x={62} $y={103} $w={814} $h={103} />
                  <DiagramBox $x={62} $y={219} $w={811} $h={69} />
                  <DiagramText $x={71} $y={46}>component</DiagramText>
                  <DiagramText $x={387} $y={37}>Header component</DiagramText>
                  <DiagramText $x={431} $y={129}>Main component</DiagramText>
                  <DiagramText $x={469} $y={238}>Footer component</DiagramText>
                  <DiagramText $x={31} $y={273}>webpage</DiagramText>
                  <PenCursor><Pen /></PenCursor>
                  <SizeSlider><SizeLines /><SliderTrack /><SliderKnob /></SizeSlider>
                </CanvasArea>
                <VScroll><VScrollDown /></VScroll>
              </CanvasRow>
              <HScroll><HArrow $side="left" /><HArrow $side="right" /></HScroll>
              <StatusBar>
                <StatusCell $w={100}><MousePointer2 size={10} strokeWidth={1.2} />340, 620px</StatusCell>
                <StatusCell $w={98}><Square size={10} strokeWidth={1} strokeDasharray="2 1" /></StatusCell>
                <StatusCell $w={120} $bare><Square size={10} strokeWidth={1.3} />1871 × 741px</StatusCell>
                <FitIcon><ScanEye size={11} strokeWidth={1} /></FitIcon>
                <ZoomSelect>100%<ChevronDown size={9} /></ZoomSelect>
                <ZoomOut size={11} strokeWidth={1.1} />
                <ZoomTrack><ZoomFill /><ZoomKnob /></ZoomTrack>
                <ZoomIn size={11} strokeWidth={1.1} />
              </StatusBar>
              <InnerTaskbar>
                <InnerIcon><WinLogo s={18} /></InnerIcon>
                <InnerIcon><CopilotLogo /></InnerIcon>
                <InnerIcon><FolderLogo s={18} /></InnerIcon>
                <InnerIcon><StoreLogo /></InnerIcon>
                <InnerIcon><ChromeLogo s={18} /></InnerIcon>
                <InnerIcon><VSCode s={18} /></InnerIcon>
                <InnerIcon><WhatsAppLogo /></InnerIcon>
                <InnerIcon><NotepadLogo s={17} /></InnerIcon>
                <InnerIcon $on><PaintLogo /></InnerIcon>
                <InnerIcon><ChromeLogo s={18} /></InnerIcon>
                <InnerIcon><MongoLogo /></InnerIcon>
                <Tray>
                  <TraySlot $w={24}><ChevronUp size={12} strokeWidth={1.5} /></TraySlot>
                  <TraySlot $w={24}><Cloud size={13} fill="#eee" strokeWidth={1} /></TraySlot>
                  <TraySlot $w={24}><Mic size={13} strokeWidth={1.1} /></TraySlot>
                  <TrayText $w={34}>ENG<br />IN</TrayText>
                  <TraySlot $w={22}><Wifi size={13} strokeWidth={1.2} /></TraySlot>
                  <TraySlot $w={14}><Speaker c="#eee" s={12} /></TraySlot>
                  <TraySlot $w={22}><Battery c="#eee" s={.8} /></TraySlot>
                  <TrayText $w={56} $align="right">19:55<br />9 December</TrayText>
                </Tray>
              </InnerTaskbar>
            </Paint>
          </StageInner>
          <WebcamTile><Avatar>CW</Avatar></WebcamTile>
          <ControlBar>
            <Timer>01:55:45</Timer>
            <CtlGroup>
              <CtlButton $bg="#0064e0"><Question /></CtlButton>
              <CtlButton $bg="#33424f"><Bars /></CtlButton>
              <CtlButton $bg="#33424f"><FaHandPaper size={20} /></CtlButton>
              <CtlButton $bg="#33424f"><Dots /></CtlButton>
              <CtlButton $bg="#a8344a"><MdCallEnd size={22} /></CtlButton>
            </CtlGroup>
          </ControlBar>
        </Stage>
      </Body>

      <Taskbar>
        <Weather>
          <WeatherIcon />
          <WeatherBadge>6</WeatherBadge>
          <WeatherText>27°C<small>Mostly clear</small></WeatherText>
        </Weather>
        <TaskCenter>
          <WinStart><WinLogo s={24} /></WinStart>
          <SearchPill>
            <SearchIcon size={17} strokeWidth={1.8} color="#222" />Search
            <PillArt>
              <svg width="42" height="28" viewBox="0 0 42 28">
                <path d="M1 14l6-6 5 5-1 8-6 1z" fill="#2f8fe8" />
                <rect x="15" y="7" width="12" height="19" rx="2" fill="#78d2c8" /><rect x="18" y="3" width="6" height="4" fill="none" stroke="#5ab" />
                <path d="M32 7h5M34.500 4v6M33 20h6M36 17v6" stroke="#4f9de0" strokeWidth="1.500" />
              </svg>
            </PillArt>
          </SearchPill>
          <TaskIcon><TaskViewLogo /></TaskIcon>
          <TaskIcon><EdgeLogo s={25} /></TaskIcon>
          <TaskIcon $run><FolderLogo s={25} /></TaskIcon>
          <TaskIcon $on $run>
            <ChromeLogo s={25} />
            <ProfileBadge $s={15} $r={6} $t={3}>P</ProfileBadge>
            <ProfileBadge $s={13} $r={8} $t={21}>P</ProfileBadge>
          </TaskIcon>
          <TaskIcon $run><SettingsLogo s={24} /></TaskIcon>
          <TaskIcon $run><VSCode s={25} /></TaskIcon>
          <TaskIcon $run><NotepadLogo s={26} /></TaskIcon>
        </TaskCenter>
        <TaskTray>
          <TaskSlot $w={28}><ChevronUp size={16} strokeWidth={1.8} /></TaskSlot>
          <TaskTrayText $w={50}>ENG<br />IN</TaskTrayText>
          <TaskSlot $w={24}><Wifi size={16} strokeWidth={1.4} /></TaskSlot>
          <TaskSlot $w={24}><Speaker s={16} /></TaskSlot>
          <TaskSlot $w={24}><Battery /></TaskSlot>
          <TaskTrayText $w={76} $align="right">19:55<br />09-12-2024</TaskTrayText>
          <TaskSlot $w={30}><Bell size={15} strokeWidth={1.3} /></TaskSlot>
        </TaskTray>
      </Taskbar>
    </Page>
  );
}
